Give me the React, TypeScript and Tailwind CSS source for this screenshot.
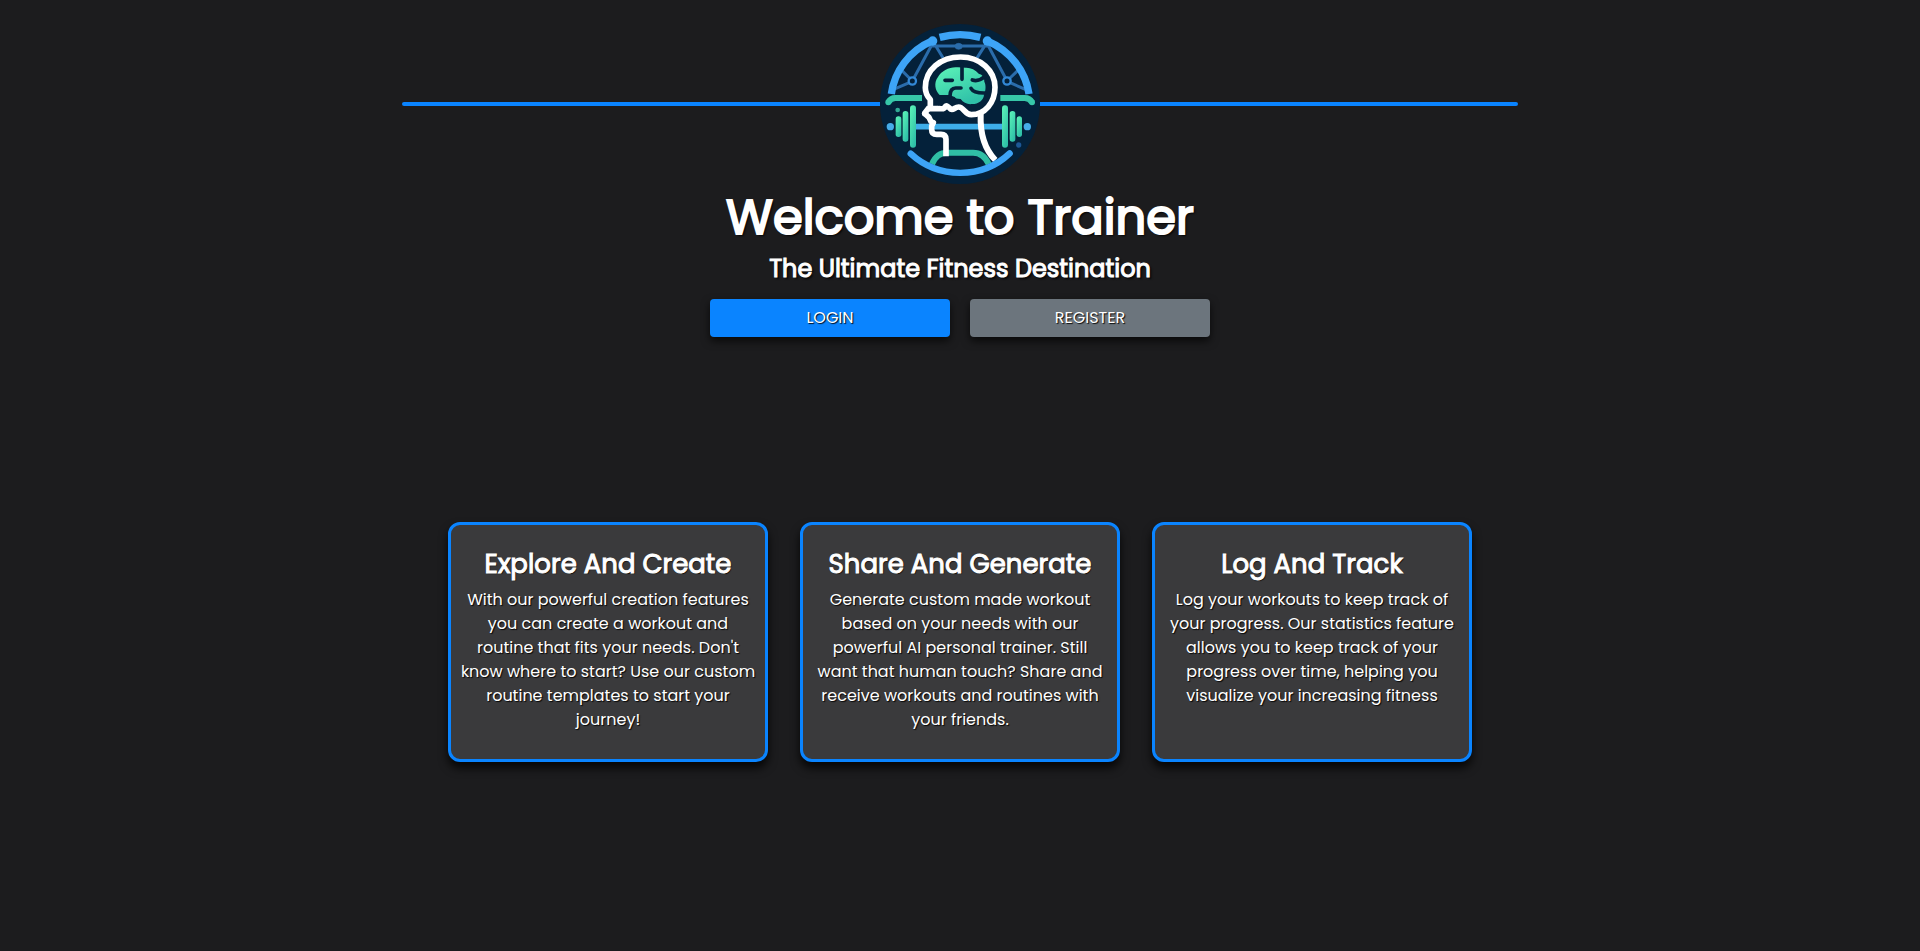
type Feature = { title: string; text: string };

const features: Feature[] = [
  {
    title: "Explore And Create",
    text: "With our powerful creation features you can create a workout and routine that fits your needs. Don't know where to start? Use our custom routine templates to start your journey!",
  },
  {
    title: "Share And Generate",
    text: "Generate custom made workout based on your needs with our powerful AI personal trainer. Still want that human touch? Share and receive workouts and routines with your friends.",
  },
  {
    title: "Log And Track",
    text: "Log your workouts to keep track of your progress. Our statistics feature allows you to keep track of your progress over time, helping you visualize your increasing fitness",
  },
];

function Logo() {
  return (
    <svg
      className="size-40 shrink-0"
      viewBox="30 28 480 480"
      fill="none"
      strokeLinecap="round"
      strokeLinejoin="round"
      role="img"
      aria-label="Trainer logo"
    >
      <defs>
        <linearGradient id="mint" x1="0" y1="0" x2="0.6" y2="1">
          <stop offset="0" stopColor="#5df5b8" />
          <stop offset="1" stopColor="#2fc0a8" />
        </linearGradient>
      </defs>
      <circle cx="270" cy="268" r="240" fill="#04213a" />

      {/* network */}
      <g stroke="#2a6cab" strokeWidth="9">
        <path d="M188 86 127 199M188 94H350M196 92 218 128M345 92 322 128M354 92 411 198M96 168 118 190M118 204 76 222M443 168 420 190M420 204 466 224" />
        <ellipse cx="266" cy="95" rx="11" ry="9" fill="#2a6cab" strokeWidth="2" />
        <circle cx="127" cy="199" r="11" fill="#04213a" stroke="#3288d6" strokeWidth="7" />
        <circle cx="411" cy="199" r="11" fill="#04213a" stroke="#3288d6" strokeWidth="7" />
      </g>

      {/* outer ring */}
      <g stroke="#3da4f7" strokeWidth="22" strokeLinecap="butt">
        <path d="M64 238C73 171 116 109 188 78" />
        <path d="M350 78C423 109 467 171 477 238" />
        <path d="M209 68Q270 52 331 68" />
      </g>
      <circle cx="188" cy="79" r="14" fill="#3da4f7" />
      <circle cx="352" cy="79" r="14" fill="#3da4f7" />

      {/* shoulders */}
      <path d="M55 263Q62 250 76 250H156M391 250H464Q479 250 486 263" stroke="#37c7a8" strokeWidth="18" strokeLinecap="butt" />
      <circle cx="55" cy="263" r="9" fill="#37c7a8" />
      <circle cx="486" cy="263" r="9" fill="#37c7a8" />
      <path d="M186 448C195 426 209 414 232 414H309C332 414 346 426 356 448" stroke="#30bfa5" strokeWidth="18" strokeLinecap="butt" />

      {/* barbell */}
      <path d="M138 336H396" stroke="#3eaee9" strokeWidth="17" strokeLinecap="butt" />
      <g fill="url(#mint)">
        <rect x="120" y="272" width="18" height="127" rx="9" />
        <rect x="98" y="289" width="17" height="92" rx="8" />
        <rect x="77" y="305" width="17" height="62" rx="8" />
        <rect x="396" y="272" width="18" height="127" rx="9" />
        <rect x="419" y="289" width="17" height="92" rx="8" />
        <rect x="440" y="305" width="16" height="62" rx="8" />
      </g>
      <circle cx="61" cy="336" r="11" fill="#46ace9" />
      <circle cx="472" cy="336" r="11" fill="#46ace9" />
      <circle cx="83" cy="286" r="7" fill="#30a994" />
      <circle cx="446" cy="391" r="8" fill="#1d5896" />

      {/* head */}
      <circle cx="270" cy="220" r="104" fill="#04213a" />
      <g stroke="#fff" strokeWidth="17">
        <path d="M181 276V255C171 244 166 232 166 219C166 166 211 127 272 127C331 127 375 168 375 218C375 265 344 300 304 300C284 300 281 277 266 277C254 277 250 288 242 283C236 277 229 270 225 277C220 287 212 280 204 282H182" />
        <path d="M178 278 164 296 177 308 183 321 190 324 185 334V345Q185 359 200 359H213Q228 359 228 374V425" strokeLinecap="butt" />
        <path d="M332 298C330 355 340 400 376 436" strokeWidth="18" strokeLinecap="butt" />
      </g>
      <circle cx="164" cy="297" r="8" fill="#fff" />
      <path d="M122 417C205 494 337 494 419 416" stroke="#3da4f7" strokeWidth="19" />

      {/* brain */}
      <path
        d="M264 158C241 155 214 168 204 187C190 205 196 229 209 241H238L254 247C256 251 260 253 272 253C280 264 293 270 306 268C326 268 341 256 342 240C348 227 348 209 343 201C343 188 337 180 327 178C315 164 301 158 286 159Z"
        fill="url(#mint)"
      />
      <g stroke="#04213a" strokeWidth="11">
        <path d="M225 197H247M276 150V194" />
        <path d="M307 196C318 200 330 198 344 186M303 221C308 230 316 236 346 235" />
        <path d="M240 245C240 229 244 220 257 220H273" />
      </g>
    </svg>
  );
}

function FeatureCard({ title, text }: Feature) {
  return (
    <article className="min-h-60 w-80 rounded-xl border-3 border-[#0a84ff] bg-[#3a3a3c] px-2 pt-[23px] pb-4 shadow-[0_6px_10px_rgba(0,0,0,0.8)]">
      <h3 className="mb-2 text-[26px] leading-8 [-webkit-text-stroke:1px_white]">{title}</h3>
      <p className="text-base">{text}</p>
    </article>
  );
}

export default function App() {
  return (
    <main className="flex min-h-screen flex-col items-center bg-[#1c1c1e] px-3 pt-6 pb-12 text-center font-[Poppins,Inter,sans-serif] text-white [text-shadow:2px_2px_2px_rgba(0,0,0,0.8)]">
      <header className="flex w-full max-w-[1116px] flex-col items-center">
        <div className="flex w-full items-center">
          <span className="h-1 flex-1 rounded-l-full bg-[#0a84ff]" />
          <Logo />
          <span className="h-1 flex-1 rounded-r-full bg-[#0a84ff]" />
        </div>
        <h1 className="mt-1 text-5xl leading-[60px] [-webkit-text-stroke:2px_white]">Welcome to Trainer</h1>
        <h2 className="mt-[6px] text-2xl leading-[30px] [-webkit-text-stroke:1px_white]">The Ultimate Fitness Destination</h2>
        <div className="mt-[15px] flex flex-wrap justify-center gap-5">
          <button type="button" className="h-[38px] w-60 rounded-sm bg-[#0a84ff] text-base shadow-[0_4px_8px_rgba(0,0,0,0.7)] [text-shadow:1px_1px_1px_rgba(0,0,0,0.9)]">
            LOGIN
          </button>
          <button type="button" className="h-[38px] w-60 rounded-sm bg-[#6c757d] text-base shadow-[0_4px_8px_rgba(0,0,0,0.7)] [text-shadow:1px_1px_1px_rgba(0,0,0,0.9)]">
            REGISTER
          </button>
        </div>
      </header>
      <section className="mt-[185px] flex flex-wrap justify-center gap-8 [text-shadow:1px_1px_1px_rgba(0,0,0,0.9)]">
        {features.map((feature) => (
          <FeatureCard key={feature.title} {...feature} />
        ))}
      </section>
    </main>
  );
}
